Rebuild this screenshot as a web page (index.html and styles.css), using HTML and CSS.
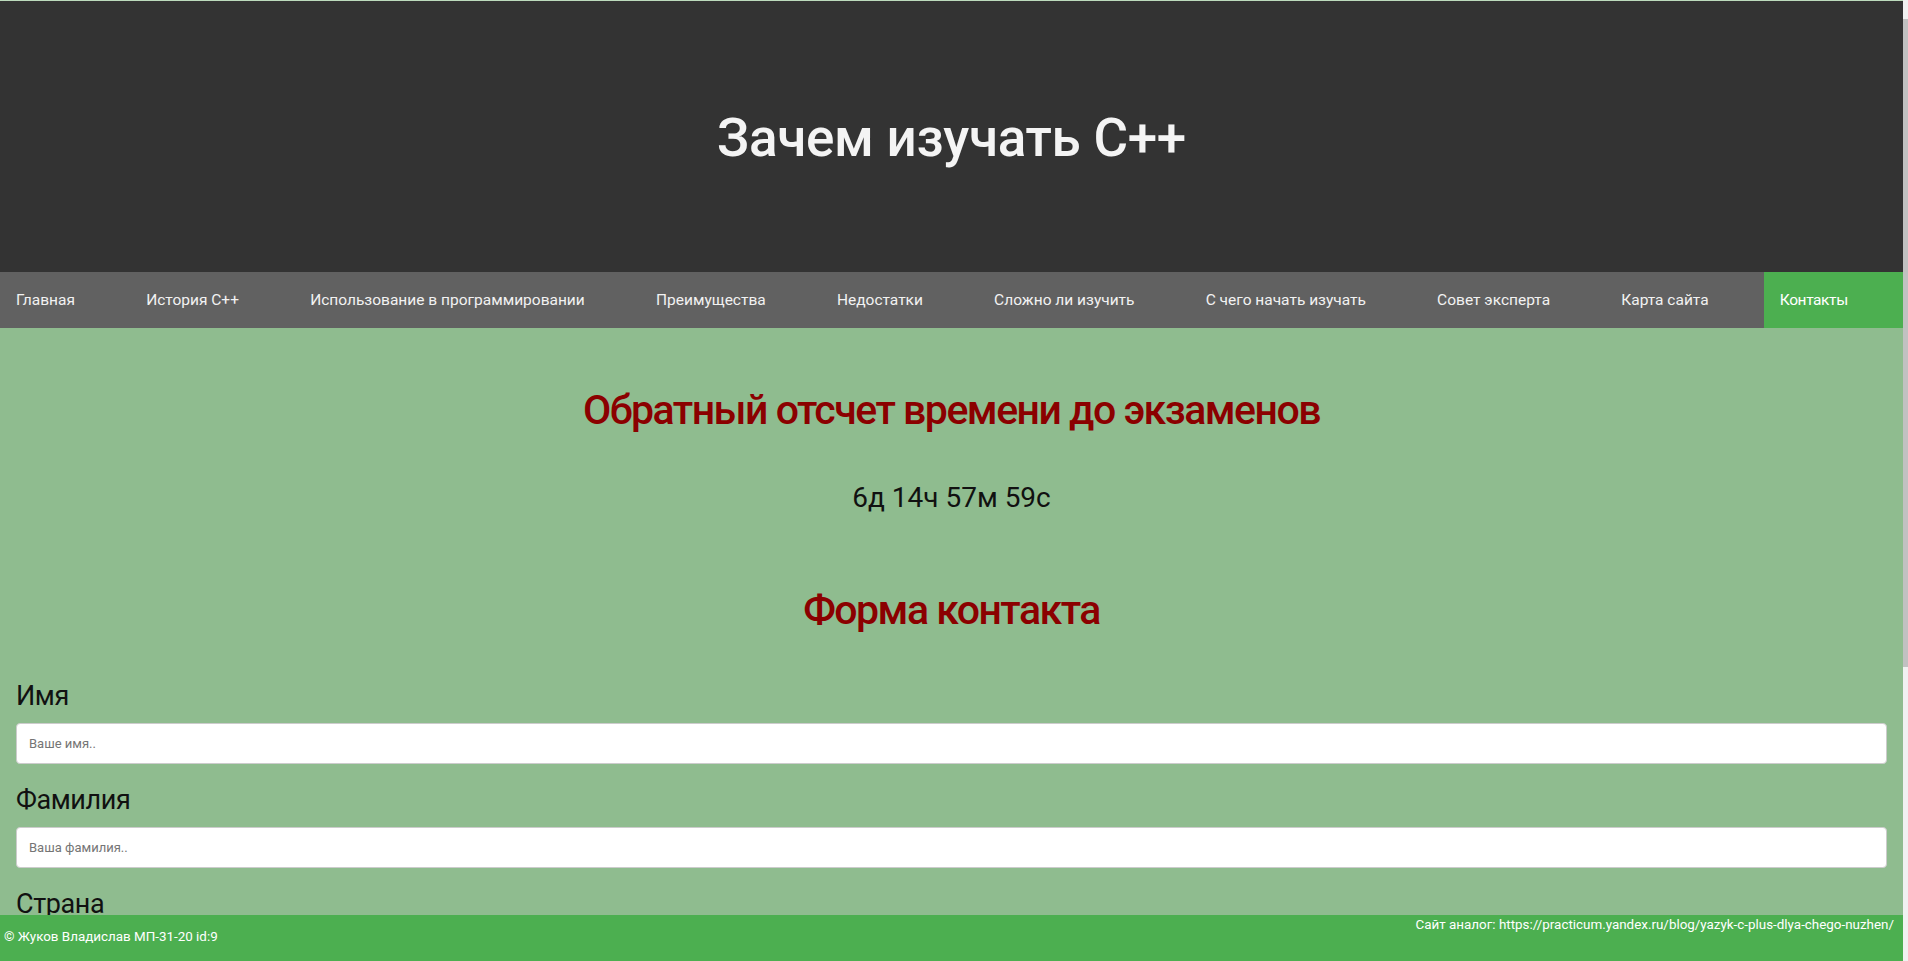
FILE: index.html
```html
<!DOCTYPE html>
<html lang="ru">
<head>
<meta charset="utf-8">
<title>Зачем изучать C++</title>
<link rel="stylesheet" href="styles.css">
</head>
<body>
<header class="hero">
  <h1 class="hero-title">Зачем изучать C++</h1>
</header>
<nav class="topnav">
  <a href="#" class="nav-link">Главная</a>
  <a href="#" class="nav-link">История C++</a>
  <a href="#" class="nav-link">Использование в программировании</a>
  <a href="#" class="nav-link">Преимущества</a>
  <a href="#" class="nav-link">Недостатки</a>
  <a href="#" class="nav-link">Сложно ли изучить</a>
  <a href="#" class="nav-link">С чего начать изучать</a>
  <a href="#" class="nav-link">Совет эксперта</a>
  <a href="#" class="nav-link">Карта сайта</a>
  <a href="#" class="nav-link active">Контакты</a>
</nav>
<main class="content">
  <h2 class="section-title first">Обратный отсчет времени до экзаменов</h2>
  <p class="countdown">6д 14ч 57м 59с</p>
  <h2 class="section-title">Форма контакта</h2>
  <form class="contact-form">
    <label class="field-label" for="fname">Имя</label>
    <input class="field-input" id="fname" type="text" placeholder="Ваше имя..">
    <label class="field-label" for="lname">Фамилия</label>
    <input class="field-input" id="lname" type="text" placeholder="Ваша фамилия..">
    <label class="field-label" for="country">Страна</label>
    <select class="field-input" id="country">
      <option>Россия</option>
      <option>Беларусь</option>
      <option>Казахстан</option>
    </select>
    <label class="field-label" for="subject">Сообщение</label>
    <textarea class="field-input field-area" id="subject" placeholder="Напишите что-нибудь.."></textarea>
    <button class="submit-btn" type="submit">Отправить</button>
  </form>
</main>
<footer class="site-footer">
  <p class="footer-analog">Сайт аналог: https://practicum.yandex.ru/blog/yazyk-c-plus-dlya-chego-nuzhen/</p>
  <p class="footer-copy">© Жуков Владислав МП-31-20 id:9</p>
</footer>
<div class="fake-scrollbar" aria-hidden="true"></div>
</body>
</html>
```

FILE: styles.css
```css
html {
  background: #8fbc8f;
}
body {
  margin: 0 5px 0 0;
  border-top: 1px solid #bddbbd;
  background: #8fbc8f;
  font-family: Roboto, "Noto Sans", sans-serif;
  color: #111;
  padding-bottom: 120px;
}
.fake-scrollbar {
  position: fixed;
  top: 0;
  right: 0;
  width: 5px;
  height: 100vh;
  background: linear-gradient(to bottom, #f1f1f1 0, #f1f1f1 19px, #c1c1c1 19px, #c1c1c1 667px, #f1f1f1 667px);
}
.hero {
  height: 271px;
  background: #333333;
  display: flex;
  align-items: center;
  justify-content: center;
}
.hero-title {
  margin: 0;
  color: #f4f4f4;
  font-size: 53px;
  font-weight: 500;
  letter-spacing: -0.3px;
  line-height: 60px;
  padding-top: 2px;
}
.topnav {
  display: flex;
  background: #616161;
  height: 56px;
}
.nav-link {
  flex: 1 1 auto;
  padding: 0 16px;
  line-height: 56px;
  font-size: 15.5px;
  color: #f2f2f2;
  text-decoration: none;
  white-space: nowrap;
}
.nav-link.active {
  background: #4caf50;
  color: #fff;
  letter-spacing: -0.4px;
}
.content {
  padding: 0 16px;
}
.section-title {
  margin: 66px 0 0;
  text-align: center;
  color: #8b0000;
  font-size: 41px;
  font-weight: 500;
  letter-spacing: -1.5px;
  line-height: 52px;
}
.section-title.first {
  margin-top: 56px;
}
.countdown {
  margin: 42px 0 0;
  text-align: center;
  font-size: 28px;
  line-height: 40px;
}
.contact-form {
  display: flex;
  flex-direction: column;
  margin-top: 43px;
}
.field-label {
  font-size: 27px;
  letter-spacing: -0.4px;
  line-height: 34px;
  margin-bottom: 10px;
}
.field-input {
  box-sizing: border-box;
  width: 100%;
  height: 41px;
  margin: 0 0 19px;
  padding: 0 12px;
  border: 1px solid #ccc;
  border-radius: 4px;
  background: #fff;
  font-family: Roboto, "Liberation Sans", sans-serif;
  font-size: 13px;
  color: #333;
}
.field-input::placeholder {
  color: #757575;
}
.field-area {
  height: 200px;
  padding-top: 12px;
  resize: vertical;
}
.submit-btn {
  align-self: flex-start;
  background: #4caf50;
  color: #fff;
  border: 0;
  border-radius: 4px;
  padding: 12px 20px;
  font-size: 16px;
}
.site-footer {
  position: fixed;
  left: 0;
  right: 5px;
  bottom: 0;
  height: 46px;
  box-sizing: border-box;
  padding: 4px 9px 0 4px;
  background: #4caf50;
  color: #fff;
  font-size: 13.4px;
  line-height: 12px;
  display: flex;
  flex-direction: column;
}
.footer-analog {
  margin: 0;
  align-self: flex-end;
}
.footer-copy {
  margin: 0;
  align-self: flex-start;
}
```
